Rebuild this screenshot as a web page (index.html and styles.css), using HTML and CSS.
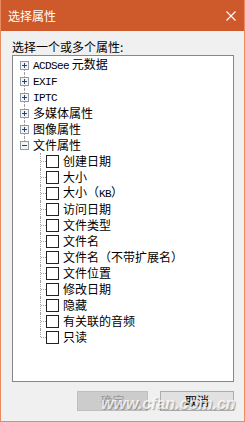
FILE: index.html
```html
<!DOCTYPE html>
<html lang="zh">
<head>
<meta charset="utf-8">
<link rel="stylesheet" href="styles.css">
</head>
<body>
<div class="window">
  <div class="titlebar">
    <span class="title">选择属性</span>
    <svg class="close" width="10" height="10" viewBox="0 0 10 10"><path d="M0.5 0.5L9.5 9.5M9.5 0.5L0.5 9.5" stroke="#fff" stroke-width="1.1" fill="none"/></svg>
  </div>
  <div class="content">
    <div class="label">选择一个或多个属性:</div>
    <div class="tree">
      <div class="node top first"><span class="exp"><svg width="9" height="9" viewBox="0 0 9 9"><rect x="0.5" y="0.5" width="8" height="8" fill="#f4f4f4" stroke="#8e9aa8"/><path d="M2 4.5H7M4.5 2V7" stroke="#2a3f7a"/></svg></span><span class="txt"><span class="lat">ACDSee</span> 元数据</span></div>
      <div class="node top"><span class="exp"><svg width="9" height="9" viewBox="0 0 9 9"><rect x="0.5" y="0.5" width="8" height="8" fill="#f4f4f4" stroke="#8e9aa8"/><path d="M2 4.5H7M4.5 2V7" stroke="#2a3f7a"/></svg></span><span class="txt"><span class="lat">EXIF</span></span></div>
      <div class="node top"><span class="exp"><svg width="9" height="9" viewBox="0 0 9 9"><rect x="0.5" y="0.5" width="8" height="8" fill="#f4f4f4" stroke="#8e9aa8"/><path d="M2 4.5H7M4.5 2V7" stroke="#2a3f7a"/></svg></span><span class="txt"><span class="lat">IPTC</span></span></div>
      <div class="node top"><span class="exp"><svg width="9" height="9" viewBox="0 0 9 9"><rect x="0.5" y="0.5" width="8" height="8" fill="#f4f4f4" stroke="#8e9aa8"/><path d="M2 4.5H7M4.5 2V7" stroke="#2a3f7a"/></svg></span><span class="txt">多媒体属性</span></div>
      <div class="node top"><span class="exp"><svg width="9" height="9" viewBox="0 0 9 9"><rect x="0.5" y="0.5" width="8" height="8" fill="#f4f4f4" stroke="#8e9aa8"/><path d="M2 4.5H7M4.5 2V7" stroke="#2a3f7a"/></svg></span><span class="txt">图像属性</span></div>
      <div class="node top last"><span class="exp"><svg width="9" height="9" viewBox="0 0 9 9"><rect x="0.5" y="0.5" width="8" height="8" fill="#f4f4f4" stroke="#8e9aa8"/><path d="M2 4.5H7" stroke="#2a3f7a"/></svg></span><span class="txt">文件属性</span></div>
      <div class="node child"><span class="cb"></span><span class="txt">创建日期</span></div>
      <div class="node child"><span class="cb"></span><span class="txt">大小</span></div>
      <div class="node child"><span class="cb"></span><span class="txt">大小（<span class="lat">KB</span>）</span></div>
      <div class="node child"><span class="cb"></span><span class="txt">访问日期</span></div>
      <div class="node child"><span class="cb"></span><span class="txt">文件类型</span></div>
      <div class="node child"><span class="cb"></span><span class="txt">文件名</span></div>
      <div class="node child"><span class="cb"></span><span class="txt">文件名（不带扩展名）</span></div>
      <div class="node child"><span class="cb"></span><span class="txt">文件位置</span></div>
      <div class="node child"><span class="cb"></span><span class="txt">修改日期</span></div>
      <div class="node child"><span class="cb"></span><span class="txt">隐藏</span></div>
      <div class="node child"><span class="cb"></span><span class="txt">有关联的音频</span></div>
      <div class="node child lastchild"><span class="cb"></span><span class="txt">只读</span></div>
    </div>
    <div class="buttons">
      <button class="btn ok" disabled>确定</button>
      <button class="btn cancel">取消</button>
    </div>
  </div>
  <div class="watermark">www.cfan.com.cn</div>
</div>
</body>
</html>
```
FILE: styles.css
```css
html, body {
  margin: 0;
  padding: 0;
  background: #f0f0f0;
}
.window {
  position: relative;
  width: 245px;
  height: 422px;
  box-sizing: border-box;
  border: 1px solid #eb8a5f;
  border-top: 0;
  background: #f0f0f0;
  font-family: "Noto Sans CJK SC", "Liberation Sans", sans-serif;
  font-size: 12px;
  color: #000;
  overflow: hidden;
}
.titlebar {
  height: 31px;
  background: #ce5a2c;
  display: flex;
  align-items: center;
  justify-content: space-between;
  padding: 0 9px 0 8px;
  margin: 0 -1px;
}
.title {
  color: #fff;
  font-size: 12px;
  line-height: 16px;
}
.close {
  display: block;
}
.content {
  padding: 9px 10px 0 11px;
}
.label {
  line-height: 14px;
  height: 14px;
  margin-bottom: 1px;
}
.tree {
  height: 327px;
  box-sizing: border-box;
  border: 1px solid #828790;
  background: #fff;
  padding-top: 1px;
}
.node {
  position: relative;
  height: 16px;
  line-height: 16px;
  display: flex;
  align-items: center;
  white-space: nowrap;
}
.lat {
  font-family: "Liberation Mono", monospace;
  font-size: 11px;
  letter-spacing: -0.6px;
}
.top {
  padding-left: 7px;
}
.top::before {
  content: "";
  position: absolute;
  left: 11px;
  top: 0;
  bottom: 0;
  border-left: 1px dotted #a0a0a0;
}
.top.first::before {
  top: 8px;
}
.top.last::before {
  bottom: 8px;
}
.exp {
  position: relative;
  z-index: 1;
  width: 9px;
  height: 9px;
  margin-right: 4px;
}
.exp svg {
  display: block;
}
.child {
  padding-left: 33px;
}
.child::before {
  content: "";
  position: absolute;
  left: 27px;
  top: 0;
  bottom: 0;
  border-left: 1px dotted #a0a0a0;
}
.child.lastchild::before {
  bottom: 8px;
}
.child::after {
  content: "";
  position: absolute;
  left: 28px;
  top: 8px;
  width: 5px;
  border-top: 1px dotted #a0a0a0;
}
.cb {
  width: 13px;
  height: 13px;
  box-sizing: border-box;
  border: 1px solid #222;
  background: #fff;
  margin-right: 4px;
  flex: none;
}
.buttons {
  display: flex;
  justify-content: flex-end;
  gap: 12px;
  margin-top: 9px;
}
.btn {
  height: 20px;
  box-sizing: border-box;
  font-family: "Noto Sans CJK SC", sans-serif;
  font-size: 12px;
  line-height: 16px;
  padding: 0;
  border-radius: 0;
}
.ok {
  width: 71px;
  background: #cccccc;
  border: 1px solid #bfbfbf;
  color: #9a9a9a;
}
.cancel {
  width: 74px;
  background: #e1e1e1;
  border: 1px solid #adadad;
  color: #000;
}
.watermark {
  position: absolute;
  left: 100px;
  top: 395px;
  font-family: "Liberation Sans", sans-serif;
  font-weight: bold;
  font-style: italic;
  font-size: 16px;
  line-height: 18px;
  color: rgba(255, 255, 255, 0.75);
  text-shadow: 1px 1px 1px rgba(0, 0, 0, 0.3);
  pointer-events: none;
}
```
